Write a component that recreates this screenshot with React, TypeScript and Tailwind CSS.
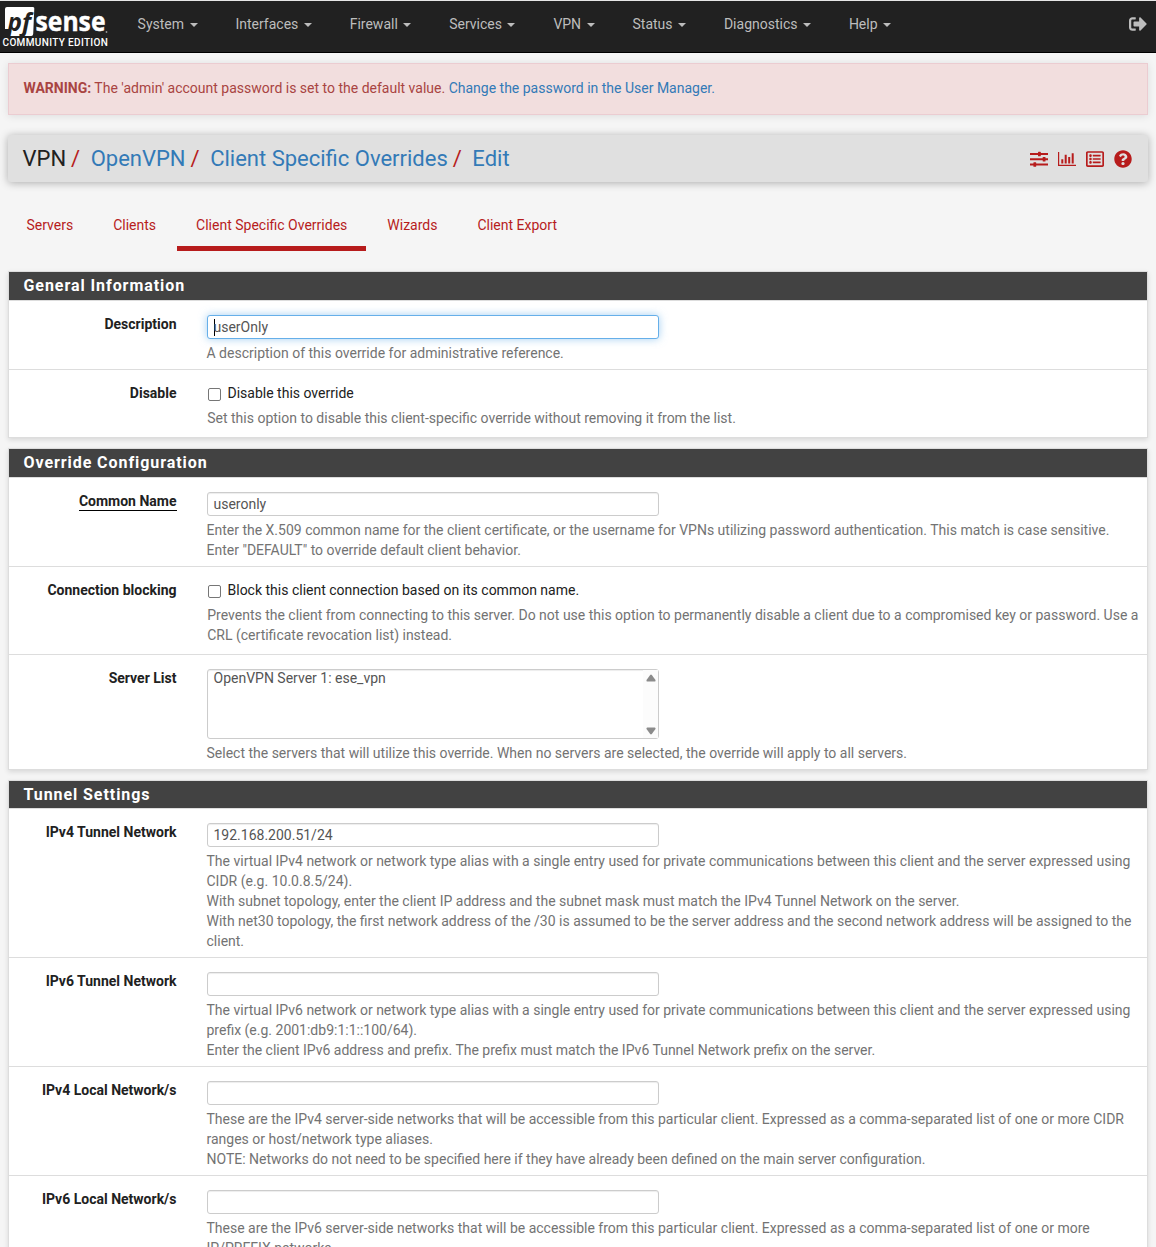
import React from "react";
import { FaSignOutAlt, FaQuestionCircle, FaRegListAlt } from "react-icons/fa";

const NAV = ["System", "Interfaces", "Firewall", "Services", "VPN", "Status", "Diagnostics", "Help"];

function Logo() {
  return (
    <div className="w-[108px] shrink-0 pt-[5px] pl-[3px]">
      <svg width="105" height="30" viewBox="0 0 105 30" className="block overflow-visible">
        <path d="M4 1h26q1.500 0 1.300 1.500L30.200 28q-.2 2-2 2H5.500L7 23H2V3q0-2 2-2z" fill="#fff" />
        <text x="4.500" y="25" fontFamily="Open Sans" fontWeight="700" fontStyle="italic" fontSize="25" fill="#212121" textLength="23.500" lengthAdjust="spacingAndGlyphs">pf</text>
        <text x="32.500" y="25" fontFamily="Open Sans" fontWeight="700" fontSize="26" fill="#fff" stroke="#fff" strokeWidth="0.4" textLength="70" lengthAdjust="spacingAndGlyphs">sense</text>
        <circle cx="103.500" cy="26" r="0.9" fill="#999" />
      </svg>
      <div className="-ml-[0.500px] text-[10px] leading-[13px] font-medium tracking-[0.35px] whitespace-nowrap text-white">COMMUNITY EDITION</div>
    </div>
  );
}

function Sliders() {
  return (
    <svg width="18" height="16" viewBox="0 0 18 16" fill="#b71c1c" className="block">
      <path d="M0 2h18v2H0zM0 7.200h18v2H0zM0 12.500h18v2H0z" />
      <rect x="8" y="0.700" width="2.800" height="4.600" rx=".6" />
      <rect x="12.700" y="5.900" width="2.800" height="4.600" rx=".6" />
      <rect x="3.400" y="11.200" width="2.800" height="4.600" rx=".6" />
    </svg>
  );
}

function BarChart() {
  return (
    <svg width="18" height="16" viewBox="0 0 18 16" fill="#b71c1c" className="block">
      <path d="M0 1h1.200v12.800H18V15H0zM3.300 8.200h2v4.300h-2zM6.700 3.800h2v8.700h-2zM10.200 6h2v6.500h-2zM13.700 2.300h2v10.200h-2z" />
    </svg>
  );
}

function Slash() {
  return <span className="mr-[10.500px] ml-[5px] text-[#b71c1c]">/</span>;
}

function Panel({ title, bar = "h-7", children }: { title: string; bar?: string; children: React.ReactNode }) {
  return (
    <section className="mb-[10px] border border-[#ddd] bg-white shadow-[0_2px_5px_rgba(0,0,0,0.12)]">
      <h2 className={"box-content border-b border-[#ddd] bg-[#424242] pl-[14.500px] text-[16px] leading-[27px] font-bold tracking-[0.930px] text-white " + bar}>{title}</h2>
      {children}
    </section>
  );
}

function Row({ label, required, height, children }: { label: string; required?: boolean; height: string; children: React.ReactNode }) {
  return (
    <div className={"flex border-b border-[#ddd] pt-[14px] last:border-b-0 " + height}>
      <div className="-mt-px w-[167.500px] shrink-0 text-right leading-[20px] font-bold text-[#212121]">
        <span className={required ? "inline-block border-b border-black leading-[17px]" : ""}>{label}</span>
      </div>
      <div className="ml-[30.500px] min-w-0 flex-1">{children}</div>
    </div>
  );
}

function Field({ value = "", focus }: { value?: string; focus?: boolean }) {
  return (
    <div className={"mb-[4px] flex h-6 w-[452px] items-center rounded-[3px] border bg-white pl-[5.500px] text-[#555] " + (focus ? "border-[#66afe9] shadow-[0_0_8px_rgba(102,175,233,0.6)]" : "border-[#ccc] shadow-[inset_0_1px_1px_rgba(0,0,0,0.075)]")}>
      {focus && <span className="-mr-px h-[17px] w-px bg-black" />}
      {value}
    </div>
  );
}

function Help({ lines }: { lines: string[] }) {
  return (
    <div className="-ml-[0.500px] leading-[20px] whitespace-nowrap text-[#737373]">
      {lines.map((l) => <div key={l}>{l}</div>)}
    </div>
  );
}

function Check({ text, lines }: { text: string; lines: string[] }) {
  return (
    <div className="-mt-px">
      <div className="mb-[5px] flex h-5 items-center text-[#212121]">
        <span className="mt-[2px] mr-[6.500px] ml-px h-[13px] w-[13px] rounded-[2px] border border-[#767676] bg-white" />
        {text}
      </div>
      <div className="pl-[0.750px]"><Help lines={lines} /></div>
    </div>
  );
}

function ServerSelect() {
  return (
    <div className="mb-[4px] flex h-[70px] w-[452px] justify-between rounded-[3px] border border-[#ccc] bg-white pl-[5.500px] text-[#555] shadow-[inset_0_1px_1px_rgba(0,0,0,0.075)]">
      <span className="-mt-[2px]">OpenVPN Server 1: ese_vpn</span>
      <span className="flex w-[15px] flex-col items-center justify-between bg-[#fcfcfc] pt-[4px] pb-[3.500px]">
        <svg width="10" height="8" viewBox="0 0 10 8" fill="#8b8b8b"><path d="M4.200.9q.8-.8 1.600 0L9.500 6q.4 1.500-.8 1.500H1.300Q.1 7.500.5 6z" /></svg>
        <svg width="10" height="8" viewBox="0 0 10 8" fill="#8b8b8b"><path d="M4.200 7.100q.8.8 1.600 0L9.500 2Q9.900.5 8.700.5H1.300Q.1.500.5 2z" /></svg>
      </span>
    </div>
  );
}

export default function App() {
  return (
    <div className="h-[1247px] overflow-hidden bg-[#f5f5f5] font-[Roboto,sans-serif] text-[14px] leading-[20px]">
      <nav className="flex h-[53px] border-t border-b border-t-[#e6e6e6] border-b-black bg-[#212121] text-[#bdbdbd]">
        <Logo />
        <div className="flex h-[46px] flex-1 items-center gap-[37.400px] pl-[29.600px]">
          {NAV.map((n) => (
            <span key={n} className="flex items-center">{n}<i className="mt-px mr-[0.500px] ml-[5.500px] border-x-4 border-t-4 border-x-transparent border-t-[#bdbdbd]" /></span>
          ))}
        </div>
        <FaSignOutAlt className="mt-[14px] mr-[9px]" size={18} />
      </nav>
      <main className="mx-2">
        <div className="mt-[10px] h-[52px] border border-[#ebccd1] bg-[#f2dede] pt-[14px] pl-[14.500px] text-[#a94442] shadow-[0_1px_8px_rgba(0,0,0,0.1)]">
          <b>WARNING:</b> The 'admin' account password is set to the default value. <a className="text-[#337ab7]">Change the password in the User Manager.</a>
        </div>
        <header className="mt-[20px] flex h-[47px] items-center rounded-[3px] bg-[#e0e0e0] pr-[16px] pl-[14.500px] text-[22px] shadow-[0_1px_8px_rgba(0,0,0,0.3)]">
          <span className="text-[#212121]">VPN</span><Slash />
          <a className="text-[#337ab7]">OpenVPN</a><Slash />
          <a className="text-[#337ab7]">Client Specific Overrides</a><Slash />
          <a className="text-[#337ab7]">Edit</a>
          <div className="mt-px ml-auto flex items-center gap-[10px] text-[#b71c1c]">
            <Sliders /><BarChart /><FaRegListAlt size={18} /><FaQuestionCircle size={18} />
          </div>
        </header>
        <div className="mt-[23px] mb-[20px] flex h-[46px] leading-[40px] text-[#b71c1c]">
          <a className="pr-[18px] pl-[18.500px]">Servers</a>
          <a className="ml-1 px-[18px]">Clients</a>
          <a className="ml-[3px] border-b-[5px] border-[#b71c1c] px-[19px]">Client Specific Overrides</a>
          <a className="ml-[3px] px-[18px]">Wizards</a>
          <a className="ml-1 px-[18px]">Client Export</a>
        </div>
        <Panel title="General Information">
          <Row label="Description" height="h-[69px]"><Field value="userOnly" focus /><Help lines={["A description of this override for administrative reference."]} /></Row>
          <Row label="Disable" height="h-[67px]"><Check text="Disable this override" lines={["Set this option to disable this client-specific override without removing it from the list."]} /></Row>
        </Panel>
        <Panel title="Override Configuration">
          <Row label="Common Name" required height="h-[89px]">
            <Field value="useronly" />
            <Help lines={["Enter the X.509 common name for the client certificate, or the username for VPNs utilizing password authentication. This match is case sensitive.", 'Enter "DEFAULT" to override default client behavior.']} />
          </Row>
          <Row label="Connection blocking" height="h-[88px]">
            <Check text="Block this client connection based on its common name." lines={["Prevents the client from connecting to this server. Do not use this option to permanently disable a client due to a compromised key or password. Use a", "CRL (certificate revocation list) instead."]} />
          </Row>
          <Row label="Server List" height="h-[114px]">
            <ServerSelect />
            <Help lines={["Select the servers that will utilize this override. When no servers are selected, the override will apply to all servers."]} />
          </Row>
        </Panel>
        <Panel title="Tunnel Settings" bar="h-[27px]">
          <Row label="IPv4 Tunnel Network" height="h-[149px]">
            <Field value="192.168.200.51/24" />
            <Help lines={[
              "The virtual IPv4 network or network type alias with a single entry used for private communications between this client and the server expressed using",
              "CIDR (e.g. 10.0.8.5/24).",
              "With subnet topology, enter the client IP address and the subnet mask must match the IPv4 Tunnel Network on the server.",
              "With net30 topology, the first network address of the /30 is assumed to be the server address and the second network address will be assigned to the",
              "client.",
            ]} />
          </Row>
          <Row label="IPv6 Tunnel Network" height="h-[109px]">
            <Field />
            <Help lines={[
              "The virtual IPv6 network or network type alias with a single entry used for private communications between this client and the server expressed using",
              "prefix (e.g. 2001:db9:1:1::100/64).",
              "Enter the client IPv6 address and prefix. The prefix must match the IPv6 Tunnel Network prefix on the server.",
            ]} />
          </Row>
          <Row label="IPv4 Local Network/s" height="h-[109px]">
            <Field />
            <Help lines={[
              "These are the IPv4 server-side networks that will be accessible from this particular client. Expressed as a comma-separated list of one or more CIDR",
              "ranges or host/network type aliases.",
              "NOTE: Networks do not need to be specified here if they have already been defined on the main server configuration.",
            ]} />
          </Row>
          <Row label="IPv6 Local Network/s" height="h-[109px]">
            <Field />
            <Help lines={[
              "These are the IPv6 server-side networks that will be accessible from this particular client. Expressed as a comma-separated list of one or more",
              "IP/PREFIX networks.",
            ]} />
          </Row>
        </Panel>
      </main>
    </div>
  );
}
